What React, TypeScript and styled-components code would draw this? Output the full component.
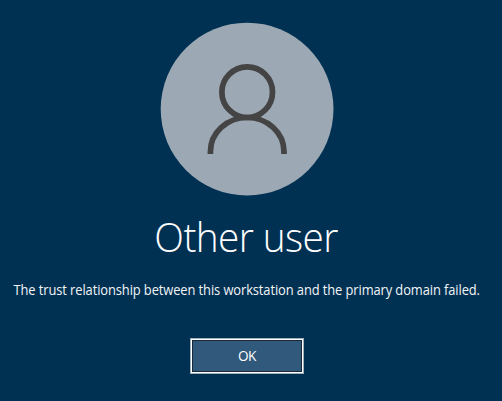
import React from "react";
import styled, { createGlobalStyle } from "styled-components";

const GlobalStyle = createGlobalStyle`
  body {
    margin: 0;
    background: #003052;
    overflow: hidden;
  }
`;

const Screen = styled.main`
  box-sizing: border-box;
  width: 502px;
  height: 401px;
  padding: 22px 8px 0 0;
  display: flex;
  flex-direction: column;
  align-items: center;
  background: #003052;
  color: #fff;
  font-family: "Open Sans", "Noto Sans", sans-serif;
`;

const Avatar = styled.svg`
  display: block;
  flex: none;
  width: 174px;
  height: 174px;
`;

const UserName = styled.h1`
  margin: 12px 2px 0 0;
  height: 56px;
  line-height: 56px;
  font-size: 41px;
  font-weight: 300;
  letter-spacing: -0.6px;
  white-space: nowrap;
  transform: scaleX(0.945);
`;

const Message = styled.p`
  margin: 16px 0 0;
  height: 20px;
  line-height: 20px;
  font-size: 13.6px;
  letter-spacing: -0.1px;
  white-space: nowrap;
  color: #f2f5f7;
  transform: scaleX(0.949);
`;

const ConfirmButton = styled.button`
  box-sizing: border-box;
  width: 114px;
  height: 36px;
  margin-top: 38px;
  padding: 0;
  border: 1px solid #9fb0bd;
  background: #31597b;
  box-shadow: inset 0 0 0 1px #fff, inset 0 0 0 2px #16283a;
  color: #fff;
  font: 13.6px/32px "Open Sans", "Noto Sans", sans-serif;
  letter-spacing: -0.4px;
`;

export default function App() {
  return (
    <>
      <GlobalStyle />
      <Screen>
        <Avatar viewBox="0 0 174 174" aria-hidden="true">
          <circle cx="87.1" cy="87.1" r="86.4" fill="#9ca9b4" />
          <g fill="none" stroke="#444" strokeWidth="5.7">
            <circle cx="87.2" cy="70.2" r="25.3" />
            <path d="M50.4 132v-2.3a36.8 34.2 0 0 1 73.6 0v2.3" />
          </g>
        </Avatar>
        <UserName>Other user</UserName>
        <Message>
          The trust relationship between this workstation and the primary domain failed.
        </Message>
        <ConfirmButton type="button">OK</ConfirmButton>
      </Screen>
    </>
  );
}
